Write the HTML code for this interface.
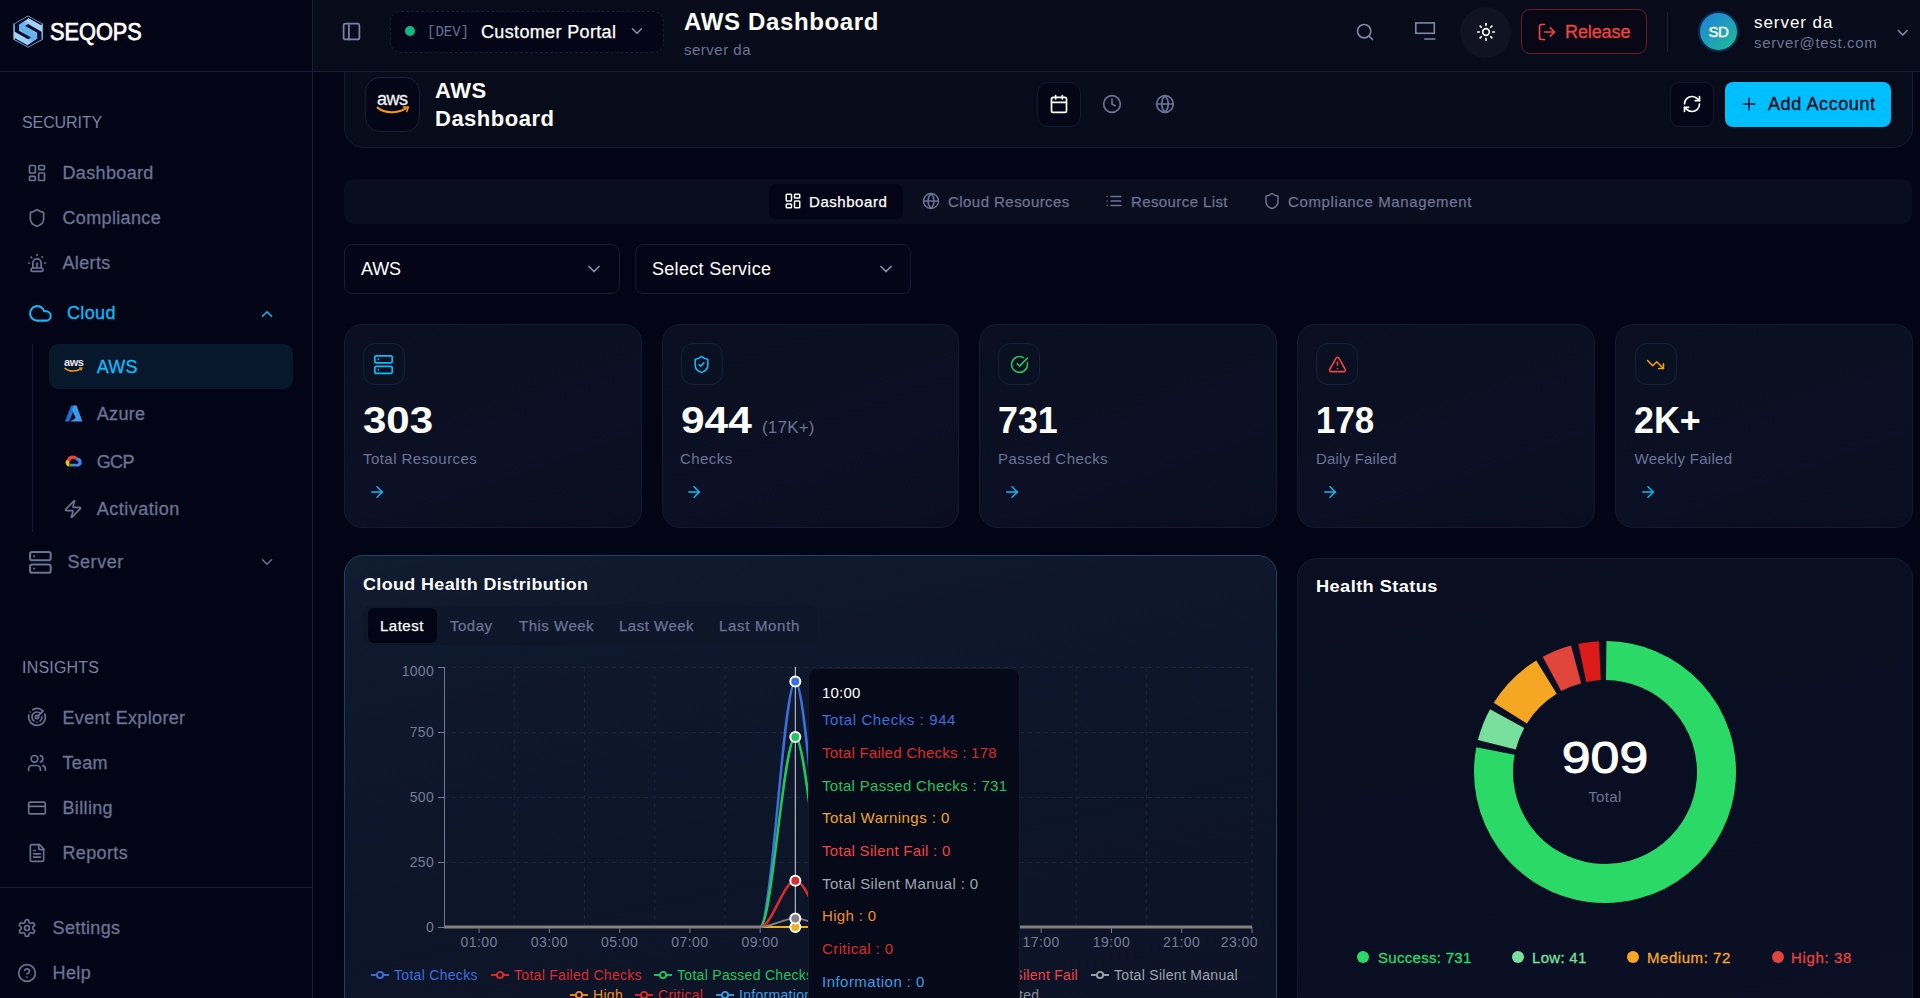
<!DOCTYPE html>
<html lang="en">
<head>
<meta charset="utf-8">
<title>AWS Dashboard</title>
<style>
*{box-sizing:border-box;margin:0;padding:0}
html,body{width:1920px;height:998px;overflow:hidden;background:#030516;color:#fff;font-family:"Liberation Sans",sans-serif;}
.abs{position:absolute}
.t{position:absolute;white-space:nowrap;line-height:1;}
.mut{color:#6b7394}
svg{position:absolute;overflow:visible}
.ic{fill:none;stroke:currentColor;stroke-width:2;stroke-linecap:round;stroke-linejoin:round}

/* ---------- sidebar ---------- */
#side{position:absolute;left:0;top:0;width:313px;height:998px;background:#030516;border-right:1px solid #191d36;}
#side .hline{position:absolute;left:0;width:312px;height:1px;background:#191d36}
.nav{color:#6b7394;font-size:18px;letter-spacing:.35px}
.t.nav{margin-top:1px;-webkit-text-stroke:.3px #6b7394}
.sec{color:#7a82a3;font-size:16px;letter-spacing:-.1px}

/* ---------- header ---------- */
#top{position:absolute;left:313px;top:0;width:1607px;height:72px;background:#080b19;border-bottom:1px solid #191d36;}

/* ---------- main ---------- */
#main{position:absolute;left:313px;top:72px;width:1607px;height:926px;background:#030516;overflow:hidden}
.card{position:absolute;border:1px solid #151a30;border-radius:18px;background:linear-gradient(160deg,#0a0e20 0%,#0b1024 60%,#0a0d1f 100%);}

.sbox{position:absolute;border:1px solid #171b33;border-radius:8px;background:#040617}
.ibox{position:absolute;width:42px;height:42px;border:1px solid #15203a;border-radius:12px;background:#091021}
.num{font-size:37.5px;font-weight:700;letter-spacing:0;transform-origin:0 50%}
.lab{font-size:15px;letter-spacing:.45px;color:#6b7394}
</style>
</head>
<body>

<!-- SIDEBAR -->
<div id="side">
  <div class="hline" style="top:71px"></div>
  <div class="hline" style="top:887px"></div>

  <!-- logo -->
  <svg style="left:8px;top:10px" width="40" height="42" viewBox="0 0 950 998">
    <defs><linearGradient id="lg1" x1="0.1" y1="0.95" x2="0.9" y2="0.05"><stop offset="0" stop-color="#a9d7f5"/><stop offset=".3" stop-color="#9bd0f3"/><stop offset=".42" stop-color="#62b1ec"/><stop offset=".6" stop-color="#6cb8ee"/><stop offset=".7" stop-color="#9dd1f3"/><stop offset="1" stop-color="#add9f6"/></linearGradient></defs>
    <polygon points="478,136 826,330 826,700 478,894 129,700 129,330" fill="#9ccdf0" stroke="#9ccdf0" stroke-width="5" stroke-linejoin="round"/>
    <polygon points="478,170 796,347 796,683 478,860 160,683 160,347" fill="url(#lg1)"/>
    <path d="M160,347 L478,170 L796,347 M160,683 L478,860 L796,683" fill="none" stroke="#050a2c" stroke-width="30" stroke-linejoin="round"/>
    <polygon points="478,163 160,343 160,515 478,697 547,652 262,492 262,347 478,207" fill="#050a2c"/>
    <polygon points="478,867 796,687 796,515 478,333 409,378 694,538 694,683 478,823" fill="#050a2c"/>
  </svg>
  <div class="t" style="left:50px;top:21px;font-size:23.5px;letter-spacing:0;transform:scaleX(.925);transform-origin:0 50%;-webkit-text-stroke:.75px #fff">SEQOPS</div>

  <div class="t sec" style="left:22px;top:115px">SECURITY</div>

  <svg class="ic nav" style="left:27px;top:163px" width="20" height="20" viewBox="0 0 24 24"><rect width="7" height="9" x="3" y="3" rx="1"/><rect width="7" height="5" x="14" y="3" rx="1"/><rect width="7" height="9" x="14" y="12" rx="1"/><rect width="7" height="5" x="3" y="16" rx="1"/></svg>
  <div class="t nav" style="left:62.5px;top:163px">Dashboard</div>

  <svg class="ic nav" style="left:27px;top:208px" width="20" height="20" viewBox="0 0 24 24"><path d="M20 13c0 5-3.5 7.5-7.66 8.95a1 1 0 0 1-.67-.01C7.5 20.5 4 18 4 13V6a1 1 0 0 1 1-1c2 0 4.5-1.2 6.24-2.72a1.17 1.17 0 0 1 1.52 0C14.51 3.81 17 5 19 5a1 1 0 0 1 1 1z"/></svg>
  <div class="t nav" style="left:62.5px;top:208px">Compliance</div>

  <svg class="ic nav" style="left:27px;top:253px" width="20" height="20" viewBox="0 0 24 24"><path d="M7 18v-6a5 5 0 1 1 10 0v6"/><path d="M5 21a1 1 0 0 0 1 1h12a1 1 0 0 0 1-1v-1a2 2 0 0 0-2-2H7a2 2 0 0 0-2 2z"/><path d="M21 12h1"/><path d="M18.5 4.5 18 5"/><path d="M2 12h1"/><path d="M12 2v1"/><path d="m4.929 4.929.707.707"/><path d="M12 12v6"/></svg>
  <div class="t nav" style="left:62.5px;top:253px">Alerts</div>

  <svg class="ic" style="left:27.5px;top:301px;color:#0cbcf8" width="24.75" height="24.75" viewBox="0 0 24 24"><path d="M17.5 19H9a7 7 0 1 1 6.71-9h1.79a4.5 4.5 0 1 1 0 9Z"/></svg>
  <div class="t" style="left:67px;top:304px;font-size:18px;letter-spacing:.35px;color:#0cbcf8;-webkit-text-stroke:.3px #0cbcf8">Cloud</div>
  <svg class="ic" style="left:258px;top:305px;color:#0cbcf8" width="18" height="18" viewBox="0 0 24 24"><path d="m18 15-6-6-6 6"/></svg>

  <div class="abs" style="left:32px;top:344px;width:1px;height:188px;background:#141830"></div>
  <div class="abs" style="left:49px;top:344px;width:243.5px;height:45px;border-radius:9px;background:#08182c"></div>
  <!-- aws mini -->
  <div class="t" style="left:64px;top:357px;font-size:11px;font-weight:700;color:#e8e8ee;letter-spacing:-0.4px">aws</div>
  <svg style="left:64px;top:367px" width="19" height="6" viewBox="0 0 19 6"><path d="M1 1.2 C5 5 12 5 17 1.6" fill="none" stroke="#f79a10" stroke-width="1.5" stroke-linecap="round"/><path d="M15 .8 L18 1 L17 3.6" fill="none" stroke="#f79a10" stroke-width="1.1"/></svg>
  <div class="t" style="left:96.7px;top:358px;font-size:18px;letter-spacing:.2px;color:#12bbf7;-webkit-text-stroke:.3px #12bbf7">AWS</div>

  <!-- azure -->
  <svg style="left:64px;top:404px" width="19" height="19" viewBox="0 0 19 19"><path d="M7.2 1.5 H12 L5.2 17.5 H.8 Z" fill="#1a6fd0"/><path d="M9.6 1.5 H12.6 L18.4 17.5 H6.2 L11.6 14 L8.2 6 Z" fill="#3c9bea"/></svg>
  <div class="t nav" style="left:96.7px;top:404px">Azure</div>

  <!-- gcp -->
  <svg style="left:64px;top:453px" width="18" height="16" viewBox="0 0 18 16">
    <path d="M5 13.5 A4 4 0 0 1 3 6.4 L6 8.4 A1.6 1.6 0 0 0 5.6 10.8 Z" fill="#fbbc05"/>
    <path d="M3 6.4 A6 5.4 0 0 1 13.6 4.6 L11.2 6.8 A3 3 0 0 0 6 8.4 Z" fill="#ea4335"/>
    <path d="M13.6 4.6 A4.6 4.6 0 0 1 14.6 13.5 H9 V10.8 H13.6 A1.8 1.8 0 0 0 12 7.6 L11.2 6.8 Z" fill="#4285f4"/>
    <path d="M9 13.5 H5 L5.6 10.8 H9 Z" fill="#34a853"/>
  </svg>
  <div class="t nav" style="left:96.7px;top:452px;letter-spacing:-.6px">GCP</div>

  <svg class="ic nav" style="left:63px;top:499px" width="20" height="20" viewBox="0 0 24 24"><path d="M4 14a1 1 0 0 1-.78-1.63l9.9-10.2a.5.5 0 0 1 .86.46l-1.92 6.02A1 1 0 0 0 13 10h7a1 1 0 0 1 .78 1.63l-9.9 10.2a.5.5 0 0 1-.86-.46l1.92-6.02A1 1 0 0 0 11 14z"/></svg>
  <div class="t nav" style="left:96.7px;top:499px;letter-spacing:.5px">Activation</div>

  <svg class="ic nav" style="left:27.5px;top:550px" width="24.75" height="24.75" viewBox="0 0 24 24"><rect width="20" height="8" x="2" y="2" rx="2" ry="2"/><rect width="20" height="8" x="2" y="14" rx="2" ry="2"/><line x1="6" x2="6.01" y1="6" y2="6"/><line x1="6" x2="6.01" y1="18" y2="18"/></svg>
  <div class="t nav" style="left:67.5px;top:552px;letter-spacing:.55px">Server</div>
  <svg class="ic nav" style="left:258px;top:553px" width="18" height="18" viewBox="0 0 24 24"><path d="m6 9 6 6 6-6"/></svg>

  <div class="t sec" style="left:22px;top:660px;letter-spacing:.2px">INSIGHTS</div>

  <svg class="ic nav" style="left:27px;top:707px" width="20" height="20" viewBox="0 0 24 24"><path d="M19.07 4.93A10 10 0 0 0 6.99 3.34"/><path d="M4 6h.01"/><path d="M2.29 9.62A10 10 0 1 0 21.31 8.35"/><path d="M16.24 7.76A6 6 0 1 0 8.23 16.67"/><path d="M12 18h.01"/><path d="M17.99 11.66A6 6 0 0 1 15.77 16.67"/><circle cx="12" cy="12" r="2"/><path d="m13.41 10.59 5.66-5.66"/></svg>
  <div class="t nav" style="left:62.5px;top:708px">Event Explorer</div>

  <svg class="ic nav" style="left:27px;top:753px" width="20" height="20" viewBox="0 0 24 24"><path d="M16 21v-2a4 4 0 0 0-4-4H6a4 4 0 0 0-4 4v2"/><circle cx="9" cy="7" r="4"/><path d="M22 21v-2a4 4 0 0 0-3-3.87"/><path d="M16 3.13a4 4 0 0 1 0 7.75"/></svg>
  <div class="t nav" style="left:62.5px;top:753px">Team</div>

  <svg class="ic nav" style="left:27px;top:798px" width="20" height="20" viewBox="0 0 24 24"><rect width="20" height="14" x="2" y="5" rx="2"/><line x1="2" x2="22" y1="10" y2="10"/></svg>
  <div class="t nav" style="left:62.5px;top:798px">Billing</div>

  <svg class="ic nav" style="left:27px;top:843px" width="20" height="20" viewBox="0 0 24 24"><path d="M15 2H6a2 2 0 0 0-2 2v16a2 2 0 0 0 2 2h12a2 2 0 0 0 2-2V7Z"/><path d="M14 2v4a2 2 0 0 0 2 2h4"/><path d="M10 9H8"/><path d="M16 13H8"/><path d="M16 17H8"/></svg>
  <div class="t nav" style="left:62.5px;top:843px">Reports</div>

  <svg class="ic nav" style="left:17px;top:918px" width="20" height="20" viewBox="0 0 24 24"><path d="M12.22 2h-.44a2 2 0 0 0-2 2v.18a2 2 0 0 1-1 1.73l-.43.25a2 2 0 0 1-2 0l-.15-.08a2 2 0 0 0-2.73.73l-.22.38a2 2 0 0 0 .73 2.73l.15.1a2 2 0 0 1 1 1.72v.51a2 2 0 0 1-1 1.74l-.15.09a2 2 0 0 0-.73 2.73l.22.38a2 2 0 0 0 2.73.73l.15-.08a2 2 0 0 1 2 0l.43.25a2 2 0 0 1 1 1.73V20a2 2 0 0 0 2 2h.44a2 2 0 0 0 2-2v-.18a2 2 0 0 1 1-1.73l.43-.25a2 2 0 0 1 2 0l.15.08a2 2 0 0 0 2.73-.73l.22-.39a2 2 0 0 0-.73-2.73l-.15-.08a2 2 0 0 1-1-1.74v-.5a2 2 0 0 1 1-1.74l.15-.09a2 2 0 0 0 .73-2.73l-.22-.38a2 2 0 0 0-2.73-.73l-.15.08a2 2 0 0 1-2 0l-.43-.25a2 2 0 0 1-1-1.73V4a2 2 0 0 0-2-2z"/><circle cx="12" cy="12" r="3"/></svg>
  <div class="t nav" style="left:52.6px;top:918px">Settings</div>

  <svg class="ic nav" style="left:17px;top:963px" width="20" height="20" viewBox="0 0 24 24"><circle cx="12" cy="12" r="10"/><path d="M9.09 9a3 3 0 0 1 5.83 1c0 2-3 3-3 3"/><path d="M12 17h.01"/></svg>
  <div class="t nav" style="left:52.6px;top:963px">Help</div>
</div>

<!-- TOP BAR -->
<div id="top">
  <svg class="ic" style="left:27.6px;top:20.8px;color:#7882a6" width="21" height="21" viewBox="0 0 24 24"><rect width="18" height="18" x="3" y="3" rx="2"/><path d="M9 3v18"/></svg>
  <div class="abs" style="left:76.5px;top:11px;width:274px;height:41.5px;border:1px dashed #1a1f38;border-radius:11px;background:#040617"></div>
  <div class="abs" style="left:92px;top:26px;width:10px;height:10px;border-radius:50%;background:#10b981"></div>
  <div class="t" style="left:114px;top:25px;font-family:'Liberation Mono',monospace;font-size:14px;color:#6b7394">[DEV]</div>
  <div class="t" style="left:168px;top:23px;font-size:18px;letter-spacing:.35px;color:#fff;-webkit-text-stroke:.25px #fff">Customer Portal</div>
  <svg class="ic" style="left:315px;top:22px;color:#8a92b2" width="18" height="18" viewBox="0 0 24 24"><path d="m6 9 6 6 6-6"/></svg>

  <div class="t" style="left:371px;top:10px;font-size:24px;font-weight:700;letter-spacing:.65px">AWS Dashboard</div>
  <div class="t mut" style="left:371px;top:42px;font-size:15px;letter-spacing:.5px">server da</div>

  <svg class="ic" style="left:1042px;top:21.5px;color:#7c86a8" width="20" height="20" viewBox="0 0 24 24"><circle cx="11" cy="11" r="8"/><path d="m21 21-4.3-4.3"/></svg>
  <svg style="left:1101px;top:20px;color:#7c86a8" width="24" height="22" viewBox="0 0 24 22"><rect x="1.8" y="2.9" width="18.5" height="10.4" fill="none" stroke="currentColor" stroke-width="1.6"/><path d="M10.6 19H20.9" fill="none" stroke="currentColor" stroke-width="1.6" stroke-linecap="round"/></svg>
  <div class="abs" style="left:1147px;top:6.5px;width:51px;height:51px;border-radius:50%;background:#0f1322"></div>
  <svg class="ic" style="left:1162.6px;top:22px;color:#fff" width="20" height="20" viewBox="0 0 24 24"><circle cx="12" cy="12" r="4"/><path d="M12 2v2"/><path d="M12 20v2"/><path d="m4.93 4.93 1.41 1.41"/><path d="m17.66 17.66 1.41 1.41"/><path d="M2 12h2"/><path d="M20 12h2"/><path d="m6.34 17.66-1.41 1.41"/><path d="m19.07 4.93-1.41 1.41"/></svg>

  <div class="abs" style="left:1208px;top:9px;width:126px;height:45px;border:1px solid #6e1d28;border-radius:9px;background:#070716"></div>
  <svg class="ic" style="left:1224px;top:22px;color:#f0443e" width="20" height="20" viewBox="0 0 24 24"><path d="M9 21H5a2 2 0 0 1-2-2V5a2 2 0 0 1 2-2h4"/><polyline points="16 17 21 12 16 7"/><line x1="21" x2="9" y1="12" y2="12"/></svg>
  <div class="t" style="left:1252px;top:23px;font-size:18px;letter-spacing:-.1px;color:#f0443e;-webkit-text-stroke:.3px #f0443e">Release</div>

  <div class="abs" style="left:1354px;top:12px;width:1px;height:40px;background:#1a1f38"></div>

  <div class="abs" style="left:1385px;top:11px;width:41px;height:41px;border-radius:50%;background:linear-gradient(140deg,#1f86d8 12%,#1fb69c 88%);border:2px solid #0e2a48"></div>
  <div class="t" style="left:1395.5px;top:24px;font-size:15px;letter-spacing:-.6px;color:#fff;-webkit-text-stroke:.4px #fff">SD</div>
  <div class="t" style="left:1441px;top:14px;font-size:17px;letter-spacing:.95px;color:#fff">server da</div>
  <div class="t mut" style="left:1441px;top:35px;font-size:15px;letter-spacing:.65px">server@test.com</div>
  <svg class="ic" style="left:1580.5px;top:23.5px;color:#8a92b2" width="17.5" height="17.5" viewBox="0 0 24 24"><path d="m6 9 6 6 6-6"/></svg>
</div>

<!-- MAIN -->
<div id="main"><div id="m" style="position:absolute;left:-313px;top:-72px;width:1920px;height:998px">
  <!-- page header card -->
  <div class="abs" style="left:344px;top:40px;width:1569px;height:108px;border:1px solid #171b33;border-radius:0 0 20px 20px;background:#080b19"></div>
  <div class="abs" style="left:365px;top:77px;width:55px;height:55px;border:1px solid #1a1f38;border-radius:15px;background:#040617"></div>
  <div class="t" style="left:377px;top:90px;font-size:18px;color:#f2f2f5;letter-spacing:-.5px;-webkit-text-stroke:.3px #f2f2f5">aws</div>
  <svg style="left:376px;top:106px" width="34" height="9" viewBox="0 0 34 9"><path d="M1.5 1.6 C9 7.6 21 7.8 30 2.4" fill="none" stroke="#f79a10" stroke-width="2" stroke-linecap="round"/><path d="M27.4 .9 L32.4 .9 L30.8 5.4" fill="none" stroke="#f79a10" stroke-width="1.5" stroke-linejoin="round" stroke-linecap="round"/></svg>
  <div class="t" style="left:435px;top:77px;font-size:22px;font-weight:700;letter-spacing:.5px;line-height:28px">AWS<br>Dashboard</div>

  <div class="abs" style="left:1037px;top:82px;width:44px;height:45px;border:1px solid #14182e;border-radius:11px;background:#040617"></div>
  <svg class="ic" style="left:1049px;top:94px;color:#fff" width="20" height="20" viewBox="0 0 24 24"><path d="M8 2v4"/><path d="M16 2v4"/><rect width="18" height="18" x="3" y="4" rx="2"/><path d="M3 10h18"/></svg>
  <svg class="ic mut" style="left:1102px;top:94px" width="20" height="20" viewBox="0 0 24 24"><circle cx="12" cy="12" r="10"/><polyline points="12 6 12 12 16 14"/></svg>
  <svg class="ic mut" style="left:1155px;top:94px" width="20" height="20" viewBox="0 0 24 24"><circle cx="12" cy="12" r="10"/><path d="M12 2a14.5 14.5 0 0 0 0 20 14.5 14.5 0 0 0 0-20"/><path d="M2 12h20"/></svg>

  <div class="abs" style="left:1670px;top:82px;width:44px;height:45px;border:1px solid #14182e;border-radius:9px;background:#040617"></div>
  <svg class="ic" style="left:1682px;top:94px;color:#fff" width="20" height="20" viewBox="0 0 24 24"><path d="M3 12a9 9 0 0 1 9-9 9.75 9.75 0 0 1 6.74 2.74L21 8"/><path d="M21 3v5h-5"/><path d="M21 12a9 9 0 0 1-9 9 9.75 9.75 0 0 1-6.74-2.74L3 16"/><path d="M8 16H3v5"/></svg>
  <div class="abs" style="left:1725px;top:82px;width:166px;height:45px;border-radius:8px;background:#00bfff"></div>
  <svg class="ic" style="left:1739px;top:94px;color:#06122a;stroke-width:1.8" width="20" height="20" viewBox="0 0 24 24"><path d="M5 12h14"/><path d="M12 5v14"/></svg>
  <div class="t" style="left:1768px;top:95px;font-size:18px;letter-spacing:.6px;color:#050a18;-webkit-text-stroke:.3px #050a18">Add Account</div>

  <!-- tabs -->
  <div class="abs" style="left:344px;top:179px;width:1568px;height:45px;border-radius:9px;background:#0a0d1d"></div>
  <div class="abs" style="left:769px;top:184px;width:133.5px;height:35px;border-radius:7px;background:#030516"></div>
  <svg class="ic" style="left:784px;top:192px;color:#fff" width="18" height="18" viewBox="0 0 24 24"><rect width="7" height="9" x="3" y="3" rx="1"/><rect width="7" height="5" x="14" y="3" rx="1"/><rect width="7" height="9" x="14" y="12" rx="1"/><rect width="7" height="5" x="3" y="16" rx="1"/></svg>
  <div class="t" style="left:809px;top:194px;font-size:15px;letter-spacing:.55px;color:#fff;-webkit-text-stroke:.25px #fff">Dashboard</div>
  <svg class="ic mut" style="left:922px;top:192px" width="18" height="18" viewBox="0 0 24 24"><circle cx="12" cy="12" r="10"/><path d="M12 2a14.5 14.5 0 0 0 0 20 14.5 14.5 0 0 0 0-20"/><path d="M2 12h20"/></svg>
  <div class="t mut" style="left:948px;top:194px;font-size:15px;letter-spacing:.45px;-webkit-text-stroke:.25px #6b7394">Cloud Resources</div>
  <svg class="ic mut" style="left:1105px;top:192px" width="18" height="18" viewBox="0 0 24 24"><path d="M3 12h.01"/><path d="M3 18h.01"/><path d="M3 6h.01"/><path d="M8 12h13"/><path d="M8 18h13"/><path d="M8 6h13"/></svg>
  <div class="t mut" style="left:1131px;top:194px;font-size:15px;letter-spacing:.4px;-webkit-text-stroke:.25px #6b7394">Resource List</div>
  <svg class="ic mut" style="left:1263px;top:192px" width="18" height="18" viewBox="0 0 24 24"><path d="M20 13c0 5-3.5 7.5-7.66 8.95a1 1 0 0 1-.67-.01C7.5 20.5 4 18 4 13V6a1 1 0 0 1 1-1c2 0 4.5-1.2 6.24-2.72a1.17 1.17 0 0 1 1.52 0C14.51 3.81 17 5 19 5a1 1 0 0 1 1 1z"/></svg>
  <div class="t mut" style="left:1288px;top:194px;font-size:15px;letter-spacing:.62px;-webkit-text-stroke:.25px #6b7394">Compliance Management</div>

  <!-- selects -->
  <div class="sbox" style="left:344px;top:244px;width:276px;height:50px"></div>
  <div class="t" style="left:361px;top:260px;font-size:18px;letter-spacing:-.2px">AWS</div>
  <svg class="ic mut" style="left:583.5px;top:259px;color:#8a92b2" width="20" height="20" viewBox="0 0 24 24"><path d="m6 9 6 6 6-6"/></svg>
  <div class="sbox" style="left:635px;top:244px;width:276px;height:50px"></div>
  <div class="t" style="left:652px;top:260px;font-size:18px;letter-spacing:.3px">Select Service</div>
  <svg class="ic mut" style="left:875.5px;top:259px;color:#8a92b2" width="20" height="20" viewBox="0 0 24 24"><path d="m6 9 6 6 6-6"/></svg>

  <!-- stat cards -->
  <div class="card" style="left:344.2px;top:324px;width:297.7px;height:203.5px"></div>
  <div class="card" style="left:661.6px;top:324px;width:297.7px;height:203.5px"></div>
  <div class="card" style="left:979.2px;top:324px;width:297.7px;height:203.5px"></div>
  <div class="card" style="left:1297.1px;top:324px;width:297.7px;height:203.5px"></div>
  <div class="card" style="left:1615.4px;top:324px;width:297.7px;height:203.5px"></div>

  <div class="ibox" style="left:363.3px;top:343px"></div>
  <svg class="ic" style="left:373px;top:354px;color:#0cbcf8" width="21" height="21" viewBox="0 0 24 24"><rect width="20" height="8" x="2" y="2" rx="2" ry="2"/><rect width="20" height="8" x="2" y="14" rx="2" ry="2"/><line x1="6" x2="6.01" y1="6" y2="6"/><line x1="6" x2="6.01" y1="18" y2="18"/></svg>
  <div class="t num" style="left:363px;top:402px;transform:scaleX(1.12)">303</div>
  <div class="t lab" style="left:363px;top:451px">Total Resources</div>
  <svg class="ic" style="left:368px;top:483px;color:#0cbcf8;stroke-width:1.9" width="18" height="18" viewBox="0 0 24 24"><path d="M5 12h14"/><path d="m12 5 7 7-7 7"/></svg>

  <div class="ibox" style="left:680.8px;top:343px"></div>
  <svg class="ic" style="left:692px;top:355px;color:#0cbcf8" width="19" height="19" viewBox="0 0 24 24"><path d="M20 13c0 5-3.5 7.5-7.66 8.95a1 1 0 0 1-.67-.01C7.5 20.5 4 18 4 13V6a1 1 0 0 1 1-1c2 0 4.5-1.2 6.24-2.72a1.17 1.17 0 0 1 1.52 0C14.51 3.81 17 5 19 5a1 1 0 0 1 1 1z"/><path d="m9 12 2 2 4-4"/></svg>
  <div class="t num" style="left:681px;top:402px;transform:scaleX(1.13)">944</div>
  <div class="t" style="left:762px;top:419px;font-size:17px;letter-spacing:.2px;color:#6b7394">(17K+)</div>
  <div class="t lab" style="left:680px;top:451px">Checks</div>
  <svg class="ic" style="left:685px;top:483px;color:#0cbcf8;stroke-width:1.9" width="18" height="18" viewBox="0 0 24 24"><path d="M5 12h14"/><path d="m12 5 7 7-7 7"/></svg>

  <div class="ibox" style="left:998.4px;top:343px"></div>
  <svg class="ic" style="left:1010px;top:355px;color:#22c55e" width="19" height="19" viewBox="0 0 24 24"><path d="M21.801 10A10 10 0 1 1 17 3.335"/><path d="m9 11 3 3L22 4"/></svg>
  <div class="t num" style="left:998px;top:402px;transform:scaleX(.955)">731</div>
  <div class="t lab" style="left:998px;top:451px">Passed Checks</div>
  <svg class="ic" style="left:1003px;top:483px;color:#0cbcf8;stroke-width:1.9" width="18" height="18" viewBox="0 0 24 24"><path d="M5 12h14"/><path d="m12 5 7 7-7 7"/></svg>

  <div class="ibox" style="left:1316.2px;top:343px"></div>
  <svg class="ic" style="left:1328px;top:355px;color:#ef4444" width="19" height="19" viewBox="0 0 24 24"><path d="m21.730 18-8-14a2 2 0 0 0-3.480 0l-8 14A2 2 0 0 0 4 21h16a2 2 0 0 0 1.730-3"/><path d="M12 9v4"/><path d="M12 17h.01"/></svg>
  <div class="t num" style="left:1316px;top:402px;transform:scaleX(.93)">178</div>
  <div class="t lab" style="left:1316px;top:451px;letter-spacing:.2px">Daily Failed</div>
  <svg class="ic" style="left:1321px;top:483px;color:#0cbcf8;stroke-width:1.9" width="18" height="18" viewBox="0 0 24 24"><path d="M5 12h14"/><path d="m12 5 7 7-7 7"/></svg>

  <div class="ibox" style="left:1634.6px;top:343px"></div>
  <svg class="ic" style="left:1646px;top:355px;color:#f59e0b" width="19" height="19" viewBox="0 0 24 24"><polyline points="22 17 13.500 8.500 8.500 13.500 2 7"/><polyline points="16 17 22 17 22 11"/></svg>
  <div class="t num" style="left:1634px;top:402px;transform:scaleX(.955)">2K+</div>
  <div class="t lab" style="left:1634.5px;top:451px;letter-spacing:.3px">Weekly Failed</div>
  <svg class="ic" style="left:1639px;top:483px;color:#0cbcf8;stroke-width:1.9" width="18" height="18" viewBox="0 0 24 24"><path d="M5 12h14"/><path d="m12 5 7 7-7 7"/></svg>

  <div class="abs" style="left:343.7px;top:554.5px;width:933.5px;height:471px;border:1px solid #124766;border-radius:19px;background:linear-gradient(168deg,#101c30 0%,#0e172b 30%,#0d1529 55%,#0d1327 100%)"></div>
<div class="t" style="left:363px;top:576px;font-size:17px;font-weight:700;letter-spacing:.35px;transform:scaleX(1.055);transform-origin:0 50%">Cloud Health Distribution</div>
<div class="abs" style="left:363px;top:606px;width:454px;height:39px;border-radius:8px;background:#0e162a"></div>
<div class="abs" style="left:368px;top:608px;width:69px;height:35px;border-radius:6px;background:#030516"></div>
<div class="t" style="left:380px;top:618px;font-size:15px;letter-spacing:.5px;color:#fff;-webkit-text-stroke:.25px #fff">Latest</div>
<div class="t" style="left:450px;top:618px;font-size:15px;letter-spacing:.5px;color:#6b7394;-webkit-text-stroke:.25px #6b7394">Today</div>
<div class="t" style="left:519px;top:618px;font-size:15px;letter-spacing:.5px;color:#6b7394;-webkit-text-stroke:.25px #6b7394">This Week</div>
<div class="t" style="left:619px;top:618px;font-size:15px;letter-spacing:.5px;color:#6b7394;-webkit-text-stroke:.25px #6b7394">Last Week</div>
<div class="t" style="left:719px;top:618px;font-size:15px;letter-spacing:.68px;color:#6b7394;-webkit-text-stroke:.25px #6b7394">Last Month</div>
<svg style="left:0;top:0" width="1920" height="998" viewBox="0 0 1920 998">
<g stroke="#1d2439" stroke-width="1" stroke-dasharray="4 4" fill="none"><path d="M444,862.5 H1252"/><path d="M444,797.5 H1252"/><path d="M444,732.5 H1252"/><path d="M444,667.5 H1252"/><path d="M514.3,667 V927"/><path d="M584.5,667 V927"/><path d="M654.8,667 V927"/><path d="M725.0,667 V927"/><path d="M795.3,667 V927"/><path d="M865.6,667 V927"/><path d="M935.8,667 V927"/><path d="M1006.1,667 V927"/><path d="M1076.3,667 V927"/><path d="M1146.6,667 V927"/><path d="M1252.0,667 V927"/></g>
<g stroke="#707890" stroke-width="1" fill="none"><path d="M444.5,667 V927"/><path d="M438,927.5 H444"/><path d="M438,862.5 H444"/><path d="M438,797.5 H444"/><path d="M438,732.5 H444"/><path d="M438,667.5 H444"/><path d="M444,927.5 H1252"/><path d="M479.1,927 V933"/><path d="M549.4,927 V933"/><path d="M619.7,927 V933"/><path d="M689.9,927 V933"/><path d="M760.2,927 V933"/><path d="M830.4,927 V933"/><path d="M900.7,927 V933"/><path d="M971.0,927 V933"/><path d="M1041.2,927 V933"/><path d="M1111.5,927 V933"/><path d="M1181.7,927 V933"/><path d="M1252.0,927 V933"/></g>
<path d="M444.0,927.0 L760.2,927.0 C771.9,927.0 783.6,927.0 795.3,927.0 C807.0,927.0 818.7,927.0 830.4,927.0 L1252,927.0" fill="none" stroke="#f0b01e" stroke-width="2"/>
<path d="M444.0,927.0 L760.2,927.0 C771.9,927.0 783.6,681.6 795.3,681.6 C807.0,681.6 818.7,927.0 830.4,927.0 L1252,927.0" fill="none" stroke="#3d6fdc" stroke-width="2.5"/>
<path d="M444.0,927.0 L760.2,927.0 C771.9,927.0 783.6,736.9 795.3,736.9 C807.0,736.9 818.7,927.0 830.4,927.0 L1252,927.0" fill="none" stroke="#22c55e" stroke-width="2.5"/>
<path d="M444.0,927.0 L760.2,927.0 C771.9,927.0 783.6,880.7 795.3,880.7 C807.0,880.7 818.7,927.0 830.4,927.0 L1252,927.0" fill="none" stroke="#dc2b2b" stroke-width="2.5"/>
<path d="M444.0,927.0 L760.2,927.0 C771.9,927.0 783.6,918.4 795.3,918.4 C807.0,918.4 818.7,927.0 830.4,927.0 L1252,927.0" fill="none" stroke="#808080" stroke-width="1.9"/>
<path d="M795.3,667 V927" stroke="#d0d4dc" stroke-width="1" fill="none"/>
<circle cx="795.3" cy="927.0" r="5" fill="#f0b01e" stroke="#fff" stroke-width="2"/>
<circle cx="795.3" cy="918.4" r="5" fill="#858585" stroke="#fff" stroke-width="2"/>
<circle cx="795.3" cy="880.7" r="5" fill="#dc2b2b" stroke="#fff" stroke-width="2"/>
<circle cx="795.3" cy="736.9" r="5" fill="#22c55e" stroke="#fff" stroke-width="2"/>
<circle cx="795.3" cy="681.6" r="5" fill="#3d6fdc" stroke="#fff" stroke-width="2"/>
</svg>
<div class="t" style="left:384px;width:50px;text-align:right;top:923px;font-size:14px;color:#737b93;letter-spacing:.3px;margin-top:-3px">0</div>
<div class="t" style="left:384px;width:50px;text-align:right;top:858px;font-size:14px;color:#737b93;letter-spacing:.3px;margin-top:-3px">250</div>
<div class="t" style="left:384px;width:50px;text-align:right;top:793px;font-size:14px;color:#737b93;letter-spacing:.3px;margin-top:-3px">500</div>
<div class="t" style="left:384px;width:50px;text-align:right;top:728px;font-size:14px;color:#737b93;letter-spacing:.3px;margin-top:-3px">750</div>
<div class="t" style="left:384px;width:50px;text-align:right;top:667px;font-size:14px;color:#737b93;letter-spacing:.3px;margin-top:-3px">1000</div>
<div class="t" style="left:449.1px;width:60px;text-align:center;top:935px;font-size:14px;color:#737b93;letter-spacing:.45px">01:00</div>
<div class="t" style="left:519.4px;width:60px;text-align:center;top:935px;font-size:14px;color:#737b93;letter-spacing:.45px">03:00</div>
<div class="t" style="left:589.7px;width:60px;text-align:center;top:935px;font-size:14px;color:#737b93;letter-spacing:.45px">05:00</div>
<div class="t" style="left:659.9px;width:60px;text-align:center;top:935px;font-size:14px;color:#737b93;letter-spacing:.45px">07:00</div>
<div class="t" style="left:730.2px;width:60px;text-align:center;top:935px;font-size:14px;color:#737b93;letter-spacing:.45px">09:00</div>
<div class="t" style="left:800.4px;width:60px;text-align:center;top:935px;font-size:14px;color:#737b93;letter-spacing:.45px">11:00</div>
<div class="t" style="left:870.7px;width:60px;text-align:center;top:935px;font-size:14px;color:#737b93;letter-spacing:.45px">13:00</div>
<div class="t" style="left:941.0px;width:60px;text-align:center;top:935px;font-size:14px;color:#737b93;letter-spacing:.45px">15:00</div>
<div class="t" style="left:1011.2px;width:60px;text-align:center;top:935px;font-size:14px;color:#737b93;letter-spacing:.45px">17:00</div>
<div class="t" style="left:1081.5px;width:60px;text-align:center;top:935px;font-size:14px;color:#737b93;letter-spacing:.45px">19:00</div>
<div class="t" style="left:1151.7px;width:60px;text-align:center;top:935px;font-size:14px;color:#737b93;letter-spacing:.45px">21:00</div>
<div class="t" style="left:1198px;width:60px;text-align:right;top:935px;font-size:14px;color:#737b93;letter-spacing:.45px">23:00</div>
<svg style="left:371px;top:969px" width="18" height="12" viewBox="0 0 18 12"><path d="M0,6 H18" stroke="#3d6fdc" stroke-width="1.9" fill="none"/><circle cx="9" cy="6" r="3.1" fill="#0c1426" stroke="#3d6fdc" stroke-width="1.9"/></svg><div class="t" style="left:394px;top:968px;font-size:14px;letter-spacing:.3px;color:#3d6fdc;">Total Checks</div>
<svg style="left:491px;top:969px" width="18" height="12" viewBox="0 0 18 12"><path d="M0,6 H18" stroke="#dc2b2b" stroke-width="1.9" fill="none"/><circle cx="9" cy="6" r="3.1" fill="#0c1426" stroke="#dc2b2b" stroke-width="1.9"/></svg><div class="t" style="left:514px;top:968px;font-size:14px;letter-spacing:.3px;color:#dc2b2b;">Total Failed Checks</div>
<svg style="left:654px;top:969px" width="18" height="12" viewBox="0 0 18 12"><path d="M0,6 H18" stroke="#22c55e" stroke-width="1.9" fill="none"/><circle cx="9" cy="6" r="3.1" fill="#0c1426" stroke="#22c55e" stroke-width="1.9"/></svg><div class="t" style="left:677px;top:968px;font-size:14px;letter-spacing:.3px;color:#22c55e;">Total Passed Checks</div>
<svg style="left:817px;top:969px" width="18" height="12" viewBox="0 0 18 12"><path d="M0,6 H18" stroke="#f0b01e" stroke-width="1.9" fill="none"/><circle cx="9" cy="6" r="3.1" fill="#0c1426" stroke="#f0b01e" stroke-width="1.9"/></svg><div class="t" style="left:840px;top:968px;font-size:14px;letter-spacing:.3px;color:#f0b01e;">Total Warnings</div>
<svg style="left:955px;top:969px" width="18" height="12" viewBox="0 0 18 12"><path d="M0,6 H18" stroke="#ef4444" stroke-width="1.9" fill="none"/><circle cx="9" cy="6" r="3.1" fill="#0c1426" stroke="#ef4444" stroke-width="1.9"/></svg><div class="t" style="left:978px;top:968px;font-size:14px;letter-spacing:.3px;color:#ef4444;">Total Silent Fail</div>
<svg style="left:1091px;top:969px" width="18" height="12" viewBox="0 0 18 12"><path d="M0,6 H18" stroke="#9ea3ad" stroke-width="1.9" fill="none"/><circle cx="9" cy="6" r="3.1" fill="#0c1426" stroke="#9ea3ad" stroke-width="1.9"/></svg><div class="t" style="left:1114px;top:968px;font-size:14px;letter-spacing:.3px;color:#9ea3ad;">Total Silent Manual</div>
<svg style="left:570px;top:989px" width="18" height="12" viewBox="0 0 18 12"><path d="M0,6 H18" stroke="#f28c28" stroke-width="1.9" fill="none"/><circle cx="9" cy="6" r="3.1" fill="#0c1426" stroke="#f28c28" stroke-width="1.9"/></svg><div class="t" style="left:593px;top:988px;font-size:14px;letter-spacing:.3px;color:#f28c28;">High</div>
<svg style="left:635px;top:989px" width="18" height="12" viewBox="0 0 18 12"><path d="M0,6 H18" stroke="#dc2b2b" stroke-width="1.9" fill="none"/><circle cx="9" cy="6" r="3.1" fill="#0c1426" stroke="#dc2b2b" stroke-width="1.9"/></svg><div class="t" style="left:658px;top:988px;font-size:14px;letter-spacing:.3px;color:#dc2b2b;">Critical</div>
<svg style="left:716px;top:989px" width="18" height="12" viewBox="0 0 18 12"><path d="M0,6 H18" stroke="#3b9fe6" stroke-width="1.9" fill="none"/><circle cx="9" cy="6" r="3.1" fill="#0c1426" stroke="#3b9fe6" stroke-width="1.9"/></svg><div class="t" style="left:739px;top:988px;font-size:14px;letter-spacing:.3px;color:#3b9fe6;">Information</div>
<svg style="left:976px;top:989px" width="18" height="12" viewBox="0 0 18 12"><path d="M0,6 H18" stroke="#8a8f99" stroke-width="1.9" fill="none"/><circle cx="9" cy="6" r="3.1" fill="#0c1426" stroke="#8a8f99" stroke-width="1.9"/></svg><div class="t" style="left:999px;top:988px;font-size:14px;letter-spacing:.3px;color:#8a8f99;">Muted</div>
<div class="abs" style="left:807.8px;top:668px;width:212.7px;height:360px;border:1px solid #141a30;border-radius:9px;background:#060918"></div>
<div class="t" style="left:822px;top:685px;font-size:15px;color:#fff;letter-spacing:0.21px">10:00</div>
<div class="t" style="left:822px;top:712px;font-size:15px;color:#3d6fdc;letter-spacing:0.59px">Total Checks : 944</div>
<div class="t" style="left:822px;top:745px;font-size:15px;color:#dc2b2b;letter-spacing:0.26px">Total Failed Checks : 178</div>
<div class="t" style="left:822px;top:778px;font-size:15px;color:#22c55e;letter-spacing:0.31px">Total Passed Checks : 731</div>
<div class="t" style="left:822px;top:810px;font-size:15px;color:#f0a81e;letter-spacing:0.46px">Total Warnings : 0</div>
<div class="t" style="left:822px;top:843px;font-size:15px;color:#ef4444;letter-spacing:0.29px">Total Silent Fail : 0</div>
<div class="t" style="left:822px;top:876px;font-size:15px;color:#a2a6ae;letter-spacing:0.39px">Total Silent Manual : 0</div>
<div class="t" style="left:822px;top:908px;font-size:15px;color:#f28c28;letter-spacing:0.33px">High : 0</div>
<div class="t" style="left:822px;top:941px;font-size:15px;color:#dc2b2b;letter-spacing:0.4px">Critical : 0</div>
<div class="t" style="left:822px;top:974px;font-size:15px;color:#3b9fe6;letter-spacing:0.47px">Information : 0</div>
  <div class="card" style="left:1297.1px;top:558px;width:616px;height:470px;border-radius:20px;background:linear-gradient(165deg,#0a0e20 0%,#0a0e22 55%,#0b1026 100%)"></div>
<div class="t" style="left:1316px;top:578px;font-size:17px;font-weight:700;letter-spacing:.4px;transform:scaleX(1.07);transform-origin:0 50%">Health Status</div>
<svg style="left:0;top:.5px" width="1920" height="998" viewBox="0 0 1920 998">
<path d="M1606.21,659.51 A111.5,111.5 0 1 1 1495.49,750.02" fill="none" stroke="#2ad966" stroke-width="39"/>
<path d="M1496.85,743.87 A111.5,111.5 0 0 1 1507.13,717.58" fill="none" stroke="#78e09c" stroke-width="39"/>
<path d="M1510.31,712.13 A111.5,111.5 0 0 1 1546.50,676.08" fill="none" stroke="#f5a623" stroke-width="39"/>
<path d="M1551.96,672.93 A111.5,111.5 0 0 1 1576.11,663.31" fill="none" stroke="#e0453c" stroke-width="39"/>
<path d="M1582.24,661.85 A111.5,111.5 0 0 1 1599.90,659.62" fill="none" stroke="#db1a1a" stroke-width="39"/>
</svg>
<div class="t" style="left:1505px;width:200px;text-align:center;top:737px;font-size:43.5px;letter-spacing:0;color:#fff;transform:scaleX(1.19);-webkit-text-stroke:.95px #fff">909</div>
<div class="t mut" style="left:1505px;width:200px;text-align:center;top:789px;font-size:15px;letter-spacing:.4px">Total</div>
<div class="abs" style="left:1357px;top:951px;width:12px;height:12px;border-radius:50%;background:#2ad966"></div>
<div class="t" style="left:1378px;top:950px;font-size:15px;letter-spacing:.3px;color:#2ad966;-webkit-text-stroke:.3px #2ad966">Success: 731</div>
<div class="abs" style="left:1512px;top:951px;width:12px;height:12px;border-radius:50%;background:#78e09c"></div>
<div class="t" style="left:1532px;top:950px;font-size:15px;letter-spacing:.3px;color:#78e09c;-webkit-text-stroke:.3px #78e09c">Low: 41</div>
<div class="abs" style="left:1627px;top:951px;width:12px;height:12px;border-radius:50%;background:#f5a623"></div>
<div class="t" style="left:1647px;top:950px;font-size:15px;letter-spacing:.55px;color:#f5a623;-webkit-text-stroke:.3px #f5a623">Medium: 72</div>
<div class="abs" style="left:1772px;top:951px;width:12px;height:12px;border-radius:50%;background:#e0453c"></div>
<div class="t" style="left:1791px;top:950px;font-size:15px;letter-spacing:.65px;color:#e0453c;-webkit-text-stroke:.3px #e0453c">High: 38</div>
</div></div>

</body>
</html>
